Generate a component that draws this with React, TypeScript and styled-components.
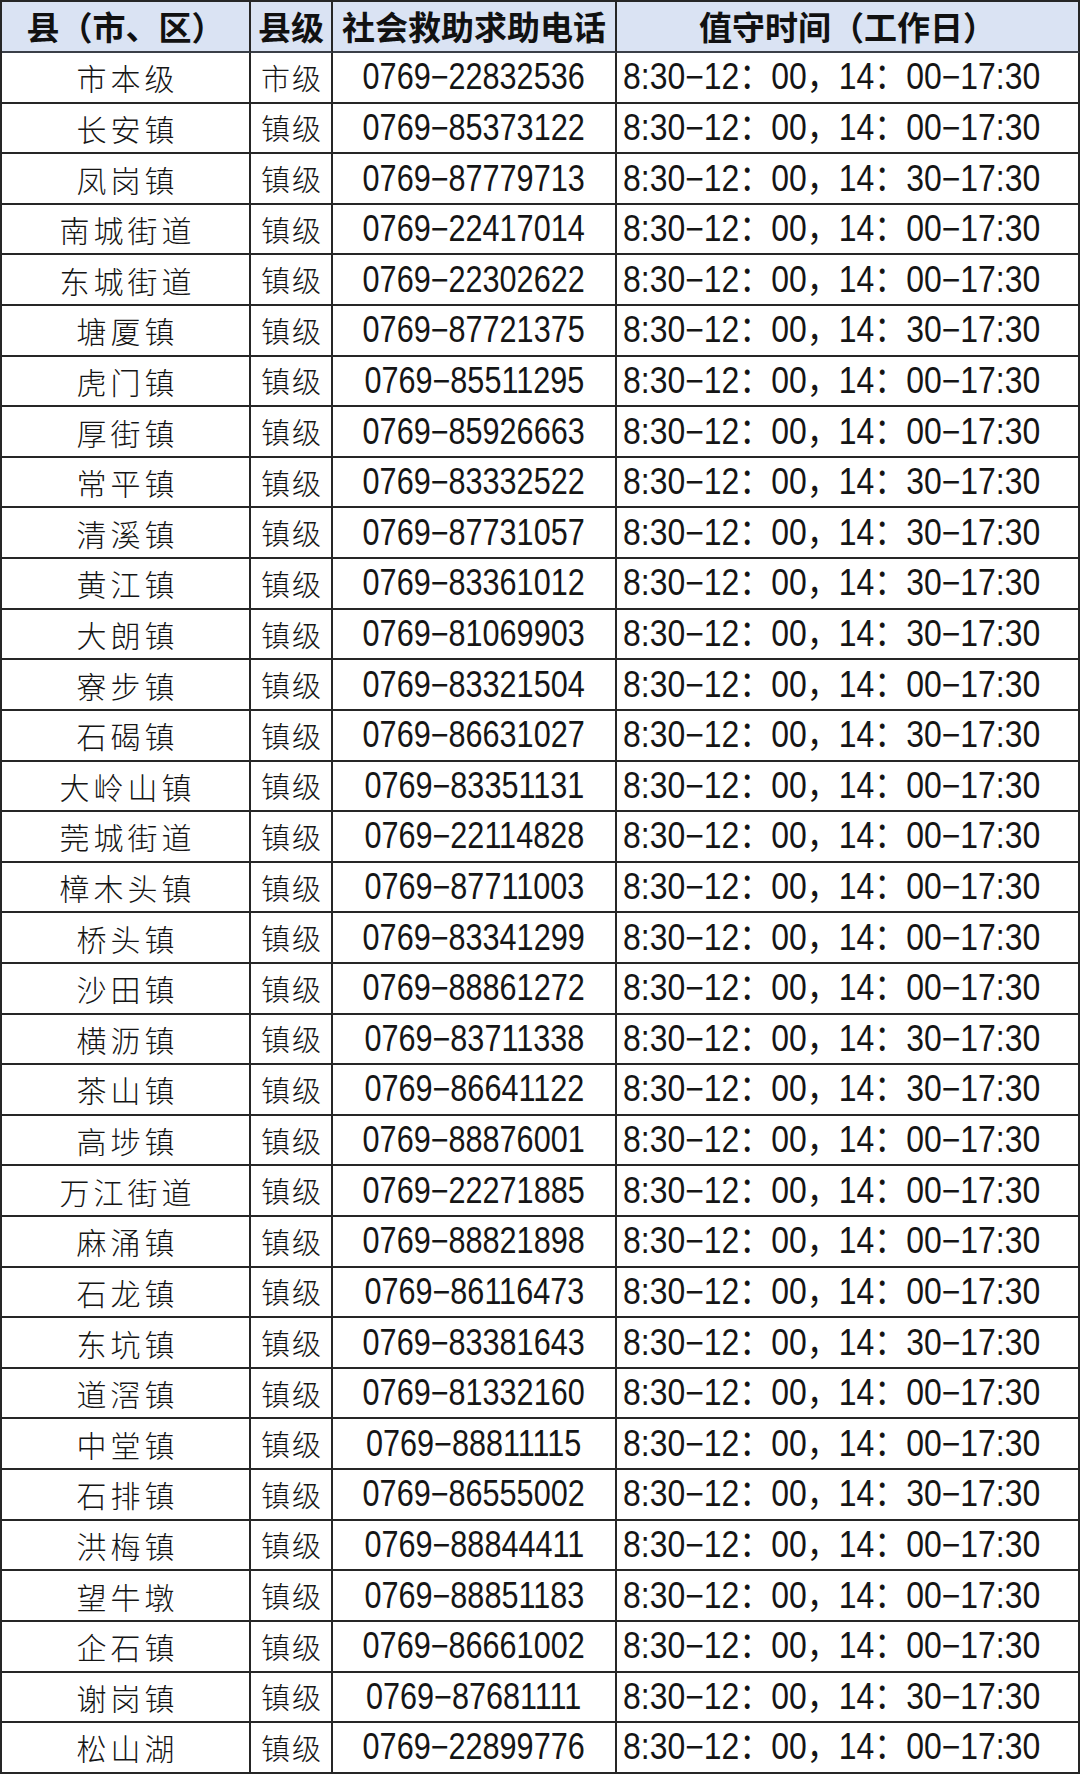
import styled, { createGlobalStyle } from 'styled-components';

interface IRow {
  name: string;
  level: string;
  phone: string;
  pm: string;
}

const rows: IRow[] = [
  { name: '市本级', level: '市级', phone: '22832536', pm: '00' },
  { name: '长安镇', level: '镇级', phone: '85373122', pm: '00' },
  { name: '凤岗镇', level: '镇级', phone: '87779713', pm: '30' },
  { name: '南城街道', level: '镇级', phone: '22417014', pm: '00' },
  { name: '东城街道', level: '镇级', phone: '22302622', pm: '00' },
  { name: '塘厦镇', level: '镇级', phone: '87721375', pm: '30' },
  { name: '虎门镇', level: '镇级', phone: '85511295', pm: '00' },
  { name: '厚街镇', level: '镇级', phone: '85926663', pm: '00' },
  { name: '常平镇', level: '镇级', phone: '83332522', pm: '30' },
  { name: '清溪镇', level: '镇级', phone: '87731057', pm: '30' },
  { name: '黄江镇', level: '镇级', phone: '83361012', pm: '30' },
  { name: '大朗镇', level: '镇级', phone: '81069903', pm: '30' },
  { name: '寮步镇', level: '镇级', phone: '83321504', pm: '00' },
  { name: '石碣镇', level: '镇级', phone: '86631027', pm: '30' },
  { name: '大岭山镇', level: '镇级', phone: '83351131', pm: '00' },
  { name: '莞城街道', level: '镇级', phone: '22114828', pm: '00' },
  { name: '樟木头镇', level: '镇级', phone: '87711003', pm: '00' },
  { name: '桥头镇', level: '镇级', phone: '83341299', pm: '00' },
  { name: '沙田镇', level: '镇级', phone: '88861272', pm: '00' },
  { name: '横沥镇', level: '镇级', phone: '83711338', pm: '30' },
  { name: '茶山镇', level: '镇级', phone: '86641122', pm: '30' },
  { name: '高埗镇', level: '镇级', phone: '88876001', pm: '00' },
  { name: '万江街道', level: '镇级', phone: '22271885', pm: '00' },
  { name: '麻涌镇', level: '镇级', phone: '88821898', pm: '00' },
  { name: '石龙镇', level: '镇级', phone: '86116473', pm: '00' },
  { name: '东坑镇', level: '镇级', phone: '83381643', pm: '30' },
  { name: '道滘镇', level: '镇级', phone: '81332160', pm: '00' },
  { name: '中堂镇', level: '镇级', phone: '88811115', pm: '00' },
  { name: '石排镇', level: '镇级', phone: '86555002', pm: '30' },
  { name: '洪梅镇', level: '镇级', phone: '88844411', pm: '00' },
  { name: '望牛墩', level: '镇级', phone: '88851183', pm: '00' },
  { name: '企石镇', level: '镇级', phone: '86661002', pm: '00' },
  { name: '谢岗镇', level: '镇级', phone: '87681111', pm: '30' },
  { name: '松山湖', level: '镇级', phone: '22899776', pm: '00' },
];

const GlobalStyle = createGlobalStyle`
  html, body {
    margin: 0;
    padding: 0;
    background: #fff;
  }
  body {
    font-family: "Noto Sans CJK SC", sans-serif;
    color: #111;
  }
`;

const Table = styled.table`
  width: 1080px;
  border-collapse: separate;
  border-spacing: 0;
  table-layout: fixed;
  border-left: 2px solid #262626;
  border-top: 2px solid #262626;
`;

const HeadCell = styled.th<{ $width: number }>`
  box-sizing: border-box;
  width: ${(p) => p.$width}px;
  height: 51px;
  padding: 0;
  background: #dae3f3;
  border-right: 2px solid #262626;
  border-bottom: 2px solid #3a3f48;
  font-family: "Noto Sans CJK SC", sans-serif;
  font-weight: 700;
  font-size: 33px;
  line-height: 1;
  text-align: center;
  white-space: nowrap;
  color: #111;
`;

const Cell = styled.td<{ $align?: 'left' | 'center' }>`
  box-sizing: border-box;
  height: 50.62px;
  padding: 0 0 0 ${(p) => (p.$align === 'left' ? '6px' : '0')};
  border-right: 2px solid #262626;
  border-bottom: 2px solid #262626;
  text-align: ${(p) => p.$align || 'center'};
  line-height: 1;
  white-space: nowrap;
`;

const NameText = styled.span<{ $spacing: number; $size: number }>`
  display: inline-block;
  font-family: "Noto Sans CJK SC", sans-serif;
  font-weight: 300;
  font-size: ${(p) => p.$size}px;
  letter-spacing: ${(p) => p.$spacing}px;
  margin-right: -${(p) => p.$spacing}px;
  color: #151515;
`;

// digits in the sheet are a tall, narrow face: squeeze Liberation Sans and
// give back the unused layout width (the run has a fixed em width)
const NumText = styled.span<{
  $origin: 'left' | 'center';
  $size: number;
  $squeeze: number;
  $em: number;
}>`
  display: inline-block;
  font-family: "Liberation Sans", "Noto Sans CJK SC", sans-serif;
  font-weight: 400;
  font-size: ${(p) => p.$size}px;
  transform: scaleX(${(p) => p.$squeeze});
  transform-origin: ${(p) => p.$origin} center;
  ${(p) => {
    const spare = p.$em * (1 - p.$squeeze);
    return p.$origin === 'center'
      ? `margin: 0 -${(spare / 2).toFixed(3)}em;`
      : `margin-right: -${spare.toFixed(3)}em;`;
  }}
  color: #151515;
`;

export default function App() {
  return (
    <>
      <GlobalStyle />
      <Table>
        <thead>
          <tr>
            <HeadCell $width={249}>县（市、区）</HeadCell>
            <HeadCell $width={82}>县级</HeadCell>
            <HeadCell $width={284}>社会救助求助电话</HeadCell>
            <HeadCell $width={463}>值守时间（工作日）</HeadCell>
          </tr>
        </thead>
        <tbody>
          {rows.map((row) => (
            <tr key={row.name}>
              <Cell>
                <NameText $size={30} $spacing={4}>
                  {row.name}
                </NameText>
              </Cell>
              <Cell>
                <NameText $size={29} $spacing={2}>
                  {row.level}
                </NameText>
              </Cell>
              <Cell>
                <NumText $origin="center" $size={36} $squeeze={0.85} $em={7.256}>
                  0769−{row.phone}
                </NumText>
              </Cell>
              <Cell $align="left">
                <NumText $origin="left" $size={36} $squeeze={0.887} $em={13.064}>
                  8:30−12：00，14：{row.pm}−17:30
                </NumText>
              </Cell>
            </tr>
          ))}
        </tbody>
      </Table>
    </>
  );
}
